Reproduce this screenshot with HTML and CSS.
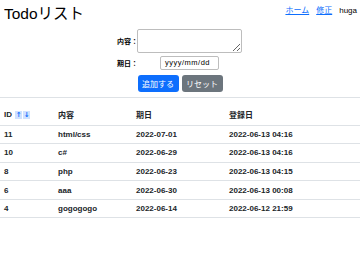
FILE: index.html
```html
<!DOCTYPE html>
<html lang="ja">
<head>
<meta charset="utf-8">
<link rel="stylesheet" href="styles.css">
</head>
<body>
<header class="top">
  <h1 class="title">Todoリスト</h1>
  <nav class="nav">
    <a href="#" class="nav-link">ホーム</a>
    <a href="#" class="nav-link">修正</a>
    <span class="user">huga</span>
  </nav>
</header>
<form class="form">
  <div class="grid">
    <label class="label">内容：</label>
    <textarea class="textarea"></textarea>
    <label class="label">期日：</label>
    <div class="date-cell"><div class="date">yyyy/mm/dd</div></div>
  </div>
  <div class="buttons">
    <button type="button" class="btn btn-primary">追加する</button>
    <button type="button" class="btn btn-secondary">リセット</button>
  </div>
</form>
<hr class="rule">
<table class="table">
  <thead>
    <tr>
      <th class="c1">ID <span class="sort">↑</span><span class="sort">↓</span></th>
      <th class="c2">内容</th>
      <th class="c3">期日</th>
      <th class="c4">登録日</th>
    </tr>
  </thead>
  <tbody>
    <tr><td>11</td><td>html/css</td><td>2022-07-01</td><td>2022-06-13 04:16</td></tr>
    <tr><td>10</td><td>c#</td><td>2022-06-29</td><td>2022-06-13 04:16</td></tr>
    <tr><td>8</td><td>php</td><td>2022-06-23</td><td>2022-06-13 04:15</td></tr>
    <tr><td>6</td><td>aaa</td><td>2022-06-30</td><td>2022-06-13 00:08</td></tr>
    <tr><td>4</td><td>gogogogo</td><td>2022-06-14</td><td>2022-06-12 21:59</td></tr>
  </tbody>
</table>
</body>
</html>
```

FILE: styles.css
```css
* { box-sizing: border-box; }
html, body { margin: 0; padding: 0; background: #fff; }
body {
  font-family: "Liberation Sans", "Noto Sans CJK JP", sans-serif;
  color: #212529;
  width: 360px;
}
.top {
  display: flex;
  justify-content: space-between;
  align-items: flex-start;
  padding: 0 3px 0 4px;
}
.title {
  margin: 4px 0 0;
  font-size: 15.5px;
  font-weight: 400;
  line-height: 20px;
  color: #000;
}
.nav {
  display: flex;
  gap: 7px;
  font-size: 8px;
  margin-top: 6px;
  line-height: 10px;
}
.nav-link { color: #0d6efd; text-decoration: underline; }
.user { color: #000; }
.form {
  display: flex;
  flex-direction: column;
  align-items: center;
  margin-top: 5px;
}
.grid {
  display: grid;
  grid-template-columns: 20px 105px;
  row-gap: 3px;
  font-size: 7px;
  font-weight: 700;
  align-items: center;
  margin-left: -1px;
}
.label { color: #000; white-space: nowrap; }
.textarea {
  display: block;
  width: 105px;
  height: 24px;
  border: 1px solid #bdbdbd;
  border-radius: 2px;
  margin: 0;
  padding: 2px;
  resize: both;
  font-size: 8px;
}
.date-cell { display: flex; justify-content: center; }
.date {
  width: 59px;
  height: 14px;
  border: 1px solid #bdbdbd;
  border-radius: 2px;
  font-size: 7.5px;
  font-weight: 400;
  line-height: 12px;
  padding-left: 4px;
  letter-spacing: 0.5px;
  white-space: nowrap;
  overflow: hidden;
  color: #000;
}
.buttons {
  display: flex;
  gap: 3px;
  margin-top: 5px;
}
.btn {
  height: 17px;
  width: 41px;
  border: none;
  border-radius: 3px;
  font-family: inherit;
  font-size: 8px;
  color: #fff;
  padding: 0;
}
.btn-primary { background: #0d6efd; }
.btn-secondary { background: #6c757d; }
.rule {
  border: 0;
  border-top: 1px solid #dee2e6;
  margin: 5px 0 0;
}
.table {
  width: 360px;
  border-collapse: collapse;
  margin-top: 6px;
  font-size: 8px;
  font-weight: 700;
  color: #212529;
}
.table th, .table td {
  text-align: left;
  padding: 0 4px;
  height: 18.6px;
  border-bottom: 1px solid #dee2e6;
  font-weight: 700;
}
.table th { height: 21px; }
.c1 { width: 54px; }
.c2 { width: 78px; }
.c3 { width: 93px; }
.sort {
  display: inline-block;
  width: 7px;
  height: 8px;
  background: #cfe2ff;
  color: #0d6efd;
  font-family: "DejaVu Sans", sans-serif;
  font-size: 7px;
  font-weight: 700;
  line-height: 8px;
  text-align: center;
  margin-left: 1px;
  vertical-align: middle;
}
```
